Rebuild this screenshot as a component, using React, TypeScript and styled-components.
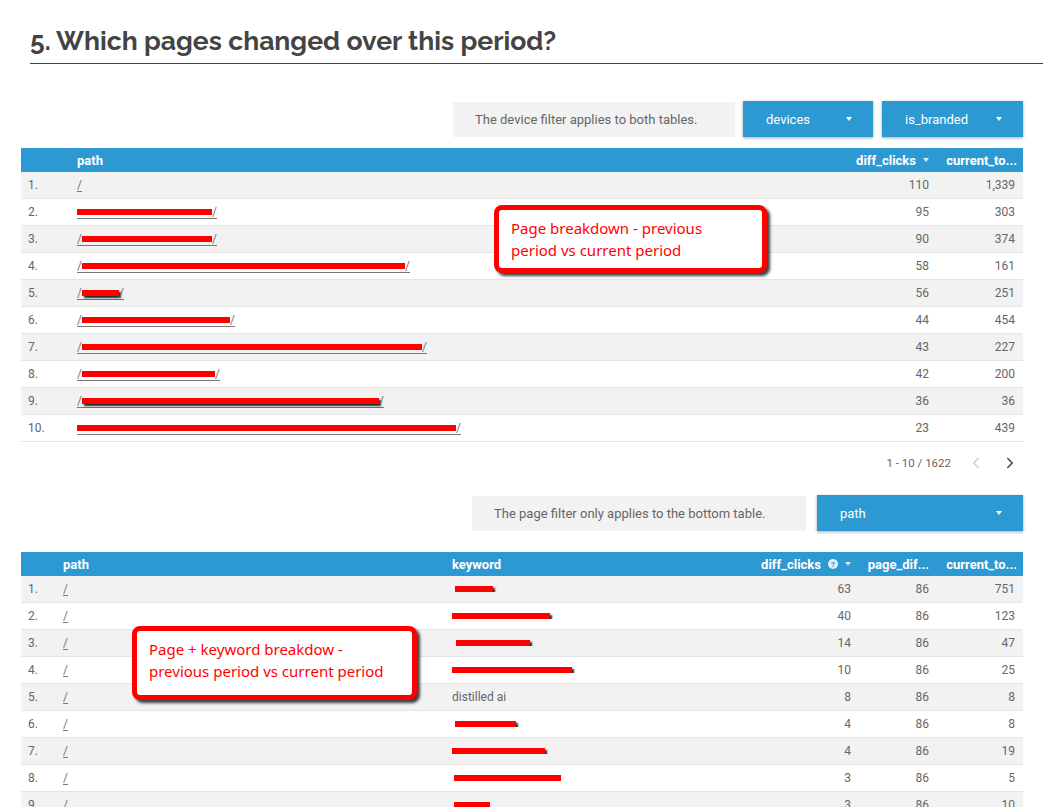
import React from 'react';
import styled, { createGlobalStyle } from 'styled-components';
import { ChevronLeft, ChevronRight } from 'lucide-react';

const GlobalStyle = createGlobalStyle`
  body {
    margin: 0;
    background: #ffffff;
    font-family: Roboto, 'Liberation Sans', sans-serif;
  }
`;

const Page = styled.div`
  width: 1052px;
  height: 807px;
  overflow: hidden;
`;

const Title = styled.h2`
  margin: 0 9px 0 30px;
  padding: 24px 0 5px 0;
  border-bottom: 1px solid #444444;
  font-family: Raleway, Lato, 'Open Sans', sans-serif;
  font-size: 26.5px;
  line-height: 34px;
  font-weight: 700;
  color: #444444;
`;

const Content = styled.div`
  padding: 0 29px 0 21px;
`;

const FilterRow = styled.div<{ $top: number }>`
  display: flex;
  justify-content: flex-end;
  align-items: center;
  gap: 8px;
  height: 36px;
  margin-top: ${(p) => p.$top}px;
`;

const Note = styled.div<{ $width: number; $gap: number }>`
  width: ${(p) => p.$width}px;
  height: 35px;
  box-sizing: border-box;
  padding-left: 22px;
  margin-right: ${(p) => p.$gap}px;
  display: flex;
  align-items: center;
  background: #f2f2f2;
  color: #666666;
  font-size: 13px;
`;

const DropButton = styled.div<{ $width: number }>`
  width: ${(p) => p.$width}px;
  height: 36px;
  box-sizing: border-box;
  padding: 0 21px 0 23px;
  display: flex;
  align-items: center;
  justify-content: space-between;
  background: #2d99d2;
  color: #ffffff;
  font-size: 13px;
  box-shadow: 0 1px 3px rgba(0, 0, 0, 0.35);
`;

const Caret = styled.span<{ $dim?: boolean }>`
  display: inline-block;
  width: 0;
  height: 0;
  border-left: 3.5px solid transparent;
  border-right: 3.5px solid transparent;
  border-top: 4px solid ${(p) => (p.$dim ? 'rgba(255,255,255,0.8)' : '#ffffff')};
`;

const TableWrap = styled.div<{ $top: number }>`
  position: relative;
  margin-top: ${(p) => p.$top}px;
`;

const HeadRow = styled.div<{ $cols: string }>`
  display: grid;
  grid-template-columns: ${(p) => p.$cols};
  height: 24px;
  align-items: center;
  background: #2d99d2;
  color: #ffffff;
  font-size: 13px;
  font-weight: 700;
`;

const Row = styled.div<{ $cols: string; $odd: boolean }>`
  display: grid;
  grid-template-columns: ${(p) => p.$cols};
  height: 26px;
  align-items: center;
  background: ${(p) => (p.$odd ? '#f2f2f2' : '#ffffff')};
  border-bottom: 1px solid #e4e4e4;
  color: #666666;
  font-size: 12px;
`;

const Cell = styled.div<{ $right?: boolean; $pad?: number }>`
  display: flex;
  align-items: center;
  justify-content: ${(p) => (p.$right ? 'flex-end' : 'flex-start')};
  gap: 7px;
  padding: ${(p) => (p.$right ? `0 ${p.$pad ?? 8}px 0 0` : `0 0 0 ${p.$pad ?? 7}px`)};
  white-space: nowrap;
  overflow: hidden;
`;

const PathLink = styled.span`
  display: inline-flex;
  align-items: center;
  height: 12px;
  border-bottom: 1px solid #777777;
  color: #777777;
  line-height: 12px;
`;

const Bar = styled.span<{ $w: number; $shadow?: boolean }>`
  display: inline-block;
  width: ${(p) => p.$w}px;
  height: 6px;
  background: #ff0000;
  box-shadow: ${(p) => (p.$shadow ? '2px 2px 2px rgba(0,0,0,0.85)' : 'none')};
`;

const HelpDot = styled.span`
  display: inline-flex;
  align-items: center;
  justify-content: center;
  width: 10px;
  height: 10px;
  border-radius: 50%;
  background: rgba(255, 255, 255, 0.85);
  color: #2d99d2;
  font-size: 8px;
  font-weight: 700;
`;

const Pager = styled.div`
  height: 42px;
  display: flex;
  justify-content: flex-end;
  align-items: center;
  gap: 16px;
  padding-right: 4px;
  color: #666666;
  font-size: 11.5px;
`;

const PagerCount = styled.span`
  margin-right: 0;
`;

const Callout = styled.div<{ $left: number; $top: number; $width: number; $height: number; $padTop: number }>`
  position: absolute;
  left: ${(p) => p.$left}px;
  top: ${(p) => p.$top}px;
  width: ${(p) => p.$width}px;
  height: ${(p) => p.$height}px;
  box-sizing: border-box;
  padding: ${(p) => p.$padTop}px 0 0 12px;
  background: #ffffff;
  border: 5px solid #ff0000;
  border-radius: 8px;
  box-shadow: 3px 3px 3px rgba(0, 0, 0, 0.75);
  color: #ff0000;
  font-family: 'Noto Sans', 'Open Sans', sans-serif;
  font-size: 15px;
  line-height: 22px;
`;

type PathRow = { bar: number; shadow?: boolean; lead?: boolean; diff: string; cur: string };

const pages: PathRow[] = [
  { bar: 0, diff: '110', cur: '1,339' },
  { bar: 135, lead: false, diff: '95', cur: '303' },
  { bar: 130, lead: true, diff: '90', cur: '374' },
  { bar: 323, lead: true, diff: '58', cur: '161' },
  { bar: 37, lead: true, shadow: true, diff: '56', cur: '251' },
  { bar: 148, lead: true, diff: '44', cur: '454' },
  { bar: 340, lead: true, diff: '43', cur: '227' },
  { bar: 133, lead: true, diff: '42', cur: '200' },
  { bar: 297, lead: true, shadow: true, diff: '36', cur: '36' },
  { bar: 379, lead: false, diff: '23', cur: '439' },
];

type KeywordRow = { bar: number; offset: number; shadow?: boolean; text?: string; diff: string; cur: string };

const keywords: KeywordRow[] = [
  { bar: 38, offset: 3, shadow: true, diff: '63', cur: '751' },
  { bar: 98, offset: 0, shadow: true, diff: '40', cur: '123' },
  { bar: 74, offset: 4, shadow: true, diff: '14', cur: '47' },
  { bar: 120, offset: 0, shadow: true, diff: '10', cur: '25' },
  { bar: 0, offset: 0, text: 'distilled ai', diff: '8', cur: '8' },
  { bar: 61, offset: 3, shadow: true, diff: '4', cur: '8' },
  { bar: 93, offset: 0, shadow: true, diff: '4', cur: '19' },
  { bar: 107, offset: 2, diff: '3', cur: '5' },
  { bar: 36, offset: 2, diff: '3', cur: '10' },
];

const pageCols = '56px 1fr 110px 86px';
const keywordCols = '42px 389px 1fr 130px 78px 86px';

function PathCell({ row }: { row: PathRow }) {
  if (!row.bar) return <PathLink>/</PathLink>;
  return (
    <PathLink>
      {row.lead ? '/' : null}
      <Bar $w={row.bar} $shadow={row.shadow} />/
    </PathLink>
  );
}

export default function App() {
  return (
    <Page>
      <GlobalStyle />
      <Title>5. Which pages changed over this period?</Title>
      <Content>
        <FilterRow $top={37}>
          <Note $width={282} $gap={0}>The device filter applies to both tables.</Note>
          <DropButton $width={130}>
            devices <Caret />
          </DropButton>
          <DropButton $width={141} style={{ marginLeft: 1 }}>
            is_branded <Caret />
          </DropButton>
        </FilterRow>

        <TableWrap $top={11}>
          <HeadRow $cols={pageCols}>
            <Cell />
            <Cell $pad={0}>path</Cell>
            <Cell $right>
              diff_clicks <Caret $dim />
            </Cell>
            <Cell $right $pad={6}>current_to...</Cell>
          </HeadRow>
          {pages.map((row, i) => (
            <Row key={i} $cols={pageCols} $odd={i % 2 === 0}>
              <Cell>{i + 1}.</Cell>
              <Cell $pad={0}>
                <PathCell row={row} />
              </Cell>
              <Cell $right>{row.diff}</Cell>
              <Cell $right>{row.cur}</Cell>
            </Row>
          ))}
          <Callout $left={473} $top={57} $width={273} $height={68} $padTop={7}>
            Page breakdown - previous
            <br />
            period vs current period
          </Callout>
        </TableWrap>

        <Pager>
          <PagerCount>1 - 10 / 1622</PagerCount>
          <ChevronLeft size={18} color="#cccccc" strokeWidth={1.8} />
          <ChevronRight size={18} color="#444444" strokeWidth={2} />
        </Pager>

        <FilterRow $top={11}>
          <Note $width={334} $gap={3}>The page filter only applies to the bottom table.</Note>
          <DropButton $width={206}>
            path <Caret />
          </DropButton>
        </FilterRow>

        <TableWrap $top={21}>
          <HeadRow $cols={keywordCols}>
            <Cell />
            <Cell $pad={0}>path</Cell>
            <Cell $pad={0}>keyword</Cell>
            <Cell $right>
              diff_clicks <HelpDot>?</HelpDot>
              <Caret $dim />
            </Cell>
            <Cell $right>page_dif...</Cell>
            <Cell $right $pad={6}>current_to...</Cell>
          </HeadRow>
          {keywords.map((row, i) => (
            <Row key={i} $cols={keywordCols} $odd={i % 2 === 0}>
              <Cell>{i + 1}.</Cell>
              <Cell $pad={0}>
                <PathLink>/</PathLink>
              </Cell>
              <Cell $pad={row.offset}>
                {row.bar ? <Bar $w={row.bar} $shadow={row.shadow} /> : <span>{row.text}</span>}
              </Cell>
              <Cell $right>{row.diff}</Cell>
              <Cell $right>86</Cell>
              <Cell $right>{row.cur}</Cell>
            </Row>
          ))}
          <Callout $left={111} $top={74} $width={285} $height={74} $padTop={7}>
            Page + keyword breakdow -
            <br />
            previous period vs current period
          </Callout>
        </TableWrap>
      </Content>
    </Page>
  );
}
